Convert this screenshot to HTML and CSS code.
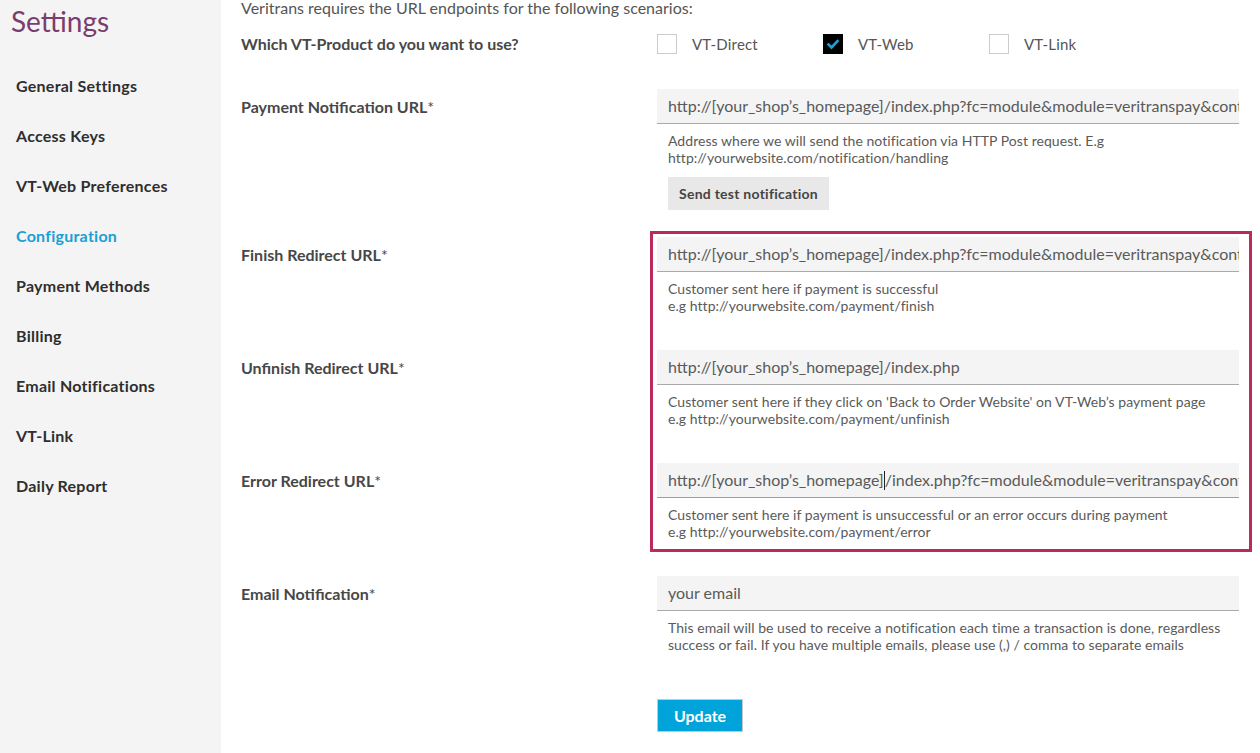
FILE: index.html
```html
<!DOCTYPE html>
<html lang="en">
<head>
<meta charset="utf-8">
<title>Settings - Configuration</title>
<link rel="stylesheet" href="styles.css">
</head>
<body>
<div class="page">
  <aside class="sidebar">
    <h1 class="title">Settings</h1>
    <nav class="nav">
      <a class="nav-item" href="#">General Settings</a>
      <a class="nav-item" href="#">Access Keys</a>
      <a class="nav-item" href="#">VT-Web Preferences</a>
      <a class="nav-item active" href="#">Configuration</a>
      <a class="nav-item" href="#">Payment Methods</a>
      <a class="nav-item" href="#">Billing</a>
      <a class="nav-item" href="#">Email Notifications</a>
      <a class="nav-item" href="#">VT-Link</a>
      <a class="nav-item" href="#">Daily Report</a>
    </nav>
  </aside>
  <main class="content">
    <p class="intro">Veritrans requires the URL endpoints for the following scenarios:</p>

    <div class="row row-product">
      <div class="label">Which VT-Product do you want to use?</div>
      <div class="choices">
        <label class="choice"><span class="box"></span><span class="choice-text">VT-Direct</span></label>
        <label class="choice"><span class="box checked"><svg width="20" height="20" viewBox="0 0 20 20"><polyline points="5.5,10.5 8.5,13.5 14.5,7" fill="none" stroke="#1a9fd6" stroke-width="2.6" stroke-linecap="square"/></svg></span><span class="choice-text">VT-Web</span></label>
        <label class="choice"><span class="box"></span><span class="choice-text">VT-Link</span></label>
      </div>
    </div>

    <div class="row row-payment">
      <div class="label">Payment Notification URL<span class="req">*</span></div>
      <div class="field">
        <div class="input">http://[your_shop’s_homepage]/index.php?fc=module&amp;module=veritranspay&amp;controller=notification</div>
        <div class="help">Address where we will send the notification via HTTP Post request. E.g<br>http://yourwebsite.com/notification/handling</div>
        <button class="btn-test" type="button">Send test notification</button>
      </div>
    </div>

    <div class="group">
      <div class="row">
        <div class="label">Finish Redirect URL<span class="req">*</span></div>
        <div class="field">
          <div class="input">http://[your_shop’s_homepage]/index.php?fc=module&amp;module=veritranspay&amp;controller=finish</div>
          <div class="help">Customer sent here if payment is successful<br>e.g http://yourwebsite.com/payment/finish</div>
        </div>
      </div>
      <div class="row">
        <div class="label">Unfinish Redirect URL<span class="req">*</span></div>
        <div class="field">
          <div class="input">http://[your_shop’s_homepage]/index.php</div>
          <div class="help">Customer sent here if they click on 'Back to Order Website' on VT-Web’s payment page<br>e.g http://yourwebsite.com/payment/unfinish</div>
        </div>
      </div>
      <div class="row">
        <div class="label">Error Redirect URL<span class="req">*</span></div>
        <div class="field">
          <div class="input focused">http://[your_shop’s_homepage]<span class="caret"></span>/index.php?fc=module&amp;module=veritranspay&amp;controller=error</div>
          <div class="help">Customer sent here if payment is unsuccessful or an error occurs during payment<br>e.g http://yourwebsite.com/payment/error</div>
        </div>
      </div>
      <div class="highlight"></div>
    </div>

    <div class="row row-email">
      <div class="label">Email Notification<span class="req">*</span></div>
      <div class="field">
        <div class="input">your email</div>
        <div class="help">This email will be used to receive a notification each time a transaction is done, regardless<br>success or fail. If you have multiple emails, please use (,) / comma to separate emails</div>
      </div>
    </div>

    <div class="row row-submit">
      <div class="label"></div>
      <div class="field">
        <button class="btn-update" type="button">Update</button>
      </div>
    </div>
  </main>
</div>
</body>
</html>
```

FILE: styles.css
```css
* { box-sizing: border-box; }

html, body {
  margin: 0;
  padding: 0;
  background: #ffffff;
}

body {
  font-family: Lato, "Liberation Sans", sans-serif;
  color: #555555;
  overflow: hidden;
}

.page {
  display: flex;
  width: 1260px;
  height: 753px;
}

.sidebar {
  width: 221px;
  flex: none;
  background: #f4f4f4;
}

.title {
  margin: 4px 0 0 11px;
  font-size: 28px;
  line-height: 34px;
  font-weight: 400;
  color: #7b3d6d;
}

.nav {
  display: flex;
  flex-direction: column;
  margin-top: 33px;
  padding-left: 16px;
}

.nav-item {
  display: block;
  height: 50px;
  line-height: 20px;
  padding-top: 5px;
  font-size: 16px;
  letter-spacing: 0.25px;
  font-weight: 700;
  color: #2e2e2e;
  text-decoration: none;
}

.nav-item.active {
  color: #1a9fd6;
}

.content {
  flex: 1;
  padding: 0 21px 0 20px;
}

.intro {
  margin: -1px 0 0;
  font-size: 16px;
  line-height: 18px;
  color: #555555;
}

.row {
  display: grid;
  grid-template-columns: 416px 582px;
  margin-top: 36px;
}

.label {
  font-size: 16px;
  line-height: 18px;
  font-weight: 700;
  color: #474747;
  padding-top: 9px;
}

.req {
  font-weight: 400;
}

.row-product {
  margin-top: 17px;
  height: 20px;
}

.row-product .label {
  padding-top: 1px;
}

.choices {
  display: flex;
}

.choice {
  display: flex;
  align-items: center;
  width: 166px;
}

.box {
  width: 20px;
  height: 20px;
  border: 1px solid #cccccc;
  background: #ffffff;
  display: block;
}

.box.checked {
  background: #000000;
  border-color: #000000;
}

.box.checked svg {
  display: block;
  margin: -1px;
}

.choice-text {
  margin-left: 15px;
  font-size: 15px;
  letter-spacing: 0.2px;
  line-height: 18px;
  color: #555555;
}

.row-payment {
  margin-top: 35px;
}

.input {
  height: 35px;
  background: #f4f4f4;
  border-bottom: 1px solid #aaaaaa;
  padding: 0 11px;
  font-size: 16px;
  letter-spacing: 0;
  line-height: 34px;
  color: #5a5a5a;
  white-space: nowrap;
  overflow: hidden;
}

.input.focused {
  border-bottom-color: #6fa8dc;
}

.caret {
  display: inline-block;
  width: 1px;
  height: 19px;
  background: #222222;
  vertical-align: -4px;
}

.help {
  padding: 8px 11px 0;
  font-size: 14px;
  letter-spacing: 0.05px;
  line-height: 17px;
  color: #5a5a5a;
}

.btn-test {
  display: block;
  margin: 11px 0 0 11px;
  width: 161px;
  height: 33px;
  border: none;
  background: #e8e8e8;
  font-family: Lato, "Liberation Sans", sans-serif;
  font-size: 14px;
  letter-spacing: 0.25px;
  font-weight: 700;
  color: #444444;
  padding: 0;
}

.group {
  position: relative;
  margin-top: 27px;
}

.group .row:first-child {
  margin-top: 0;
}

.highlight {
  position: absolute;
  left: 409px;
  right: -13px;
  top: -6px;
  bottom: -12px;
  border: 3px solid #bb2a5c;
  pointer-events: none;
}

.row-submit {
  margin-top: 46px;
}

.btn-update {
  display: block;
  width: 86px;
  height: 33px;
  padding: 0;
  border: 1px solid #c8c8c8;
  background: #00a3da;
  color: #ffffff;
  font-family: Lato, "Liberation Sans", sans-serif;
  font-size: 16px;
  font-weight: 700;
}
```
